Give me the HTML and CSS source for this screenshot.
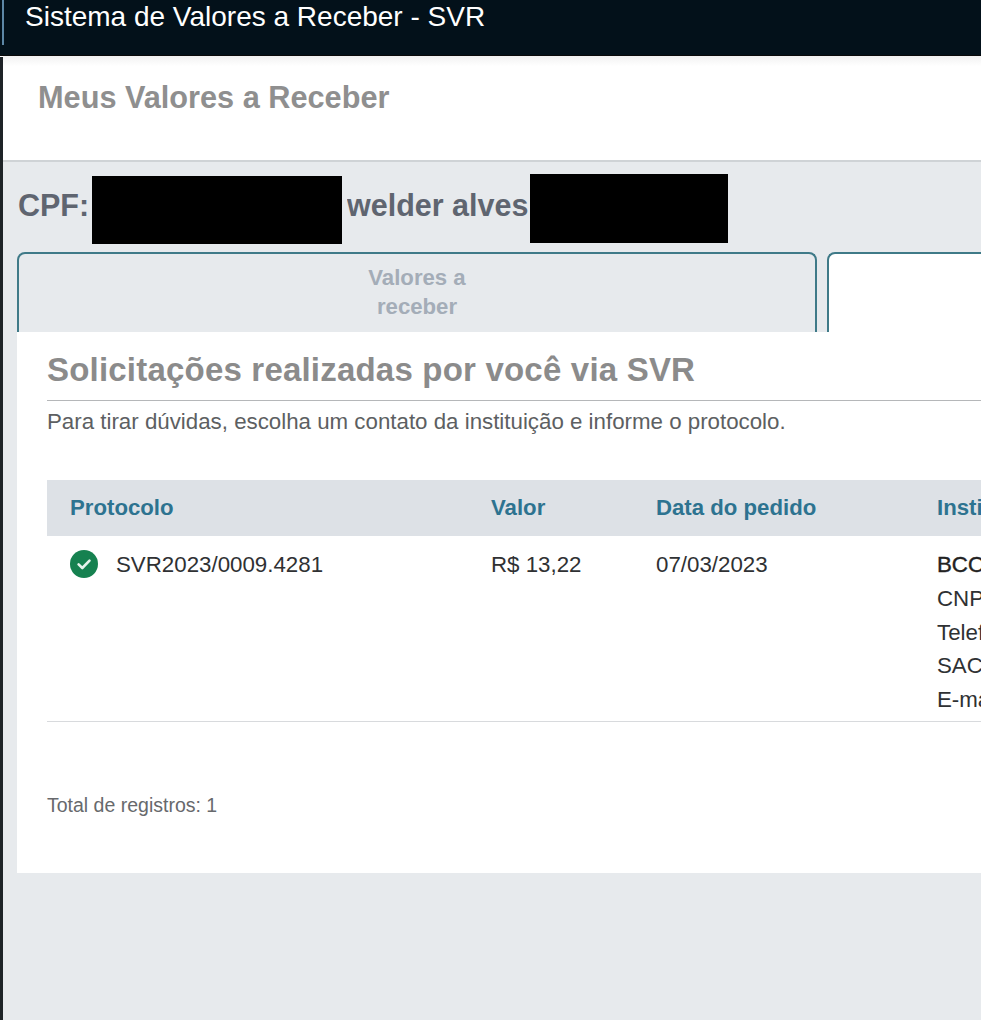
FILE: index.html
```html
<!DOCTYPE html>
<html lang="pt-BR">
<head>
<meta charset="utf-8">
<title>Sistema de Valores a Receber - SVR</title>
<link rel="stylesheet" href="styles.css">
</head>
<body>
<div class="frame">
  <header class="topbar"><span class="topbar-mark"></span><span class="topbar-title">Sistema de Valores a Receber - SVR</span></header>
  <div class="shell">
    <div class="edge"></div>
    <main class="page">
      <section class="page-head"><h1>Meus Valores a Receber</h1></section>
      <section class="content">
        <div class="identity">
          <span class="id-label">CPF:</span>
          <span class="redact redact-cpf"></span>
          <span class="id-name">welder alves</span>
          <span class="redact redact-name"></span>
        </div>
        <nav class="tabs">
          <div class="tab tab-inactive">Valores a<br>receber</div>
          <div class="tab tab-active"></div>
        </nav>
        <article class="card">
          <h2>Solicitações realizadas por você via SVR</h2>
          <p class="lead">Para tirar dúvidas, escolha um contato da instituição e informe o protocolo.</p>
          <div class="table">
            <div class="thead">
              <div>Protocolo</div><div>Valor</div><div>Data do pedido</div><div>Instituição</div>
            </div>
            <div class="trow">
              <div class="protocol">
                <svg class="check" viewBox="0 0 28 28" aria-hidden="true"><circle cx="14" cy="14" r="14" fill="#168150"/><path d="M8.6 14.4l3.7 3.6 7.2-7.4" fill="none" stroke="#e6f3ec" stroke-width="2.6" stroke-linecap="round" stroke-linejoin="round"/></svg>
                <span>SVR2023/0009.4281</span>
              </div>
              <div>R$ 13,22</div>
              <div>07/03/2023</div>
              <div class="inst">
                <strong>BCO</strong>
                <span>CNPJ:</span>
                <span>Telefone:</span>
                <span>SAC:</span>
                <span>E-mail:</span>
              </div>
            </div>
          </div>
          <p class="total">Total de registros: 1</p>
        </article>
      </section>
    </main>
  </div>
</div>
</body>
</html>
```
FILE: styles.css
```css
* { box-sizing: border-box; }
html, body { margin: 0; padding: 0; background: #fff; }
body { font-family: "Liberation Sans", Arial, sans-serif; }
.frame { width: 981px; height: 1020px; overflow: hidden; display: flex; flex-direction: column; }
.topbar { height: 56px; flex: none; background: #03111a; color: #fff; display: flex; align-items: flex-start; border-bottom: 1px solid #0a0a0a; }
.topbar-mark { width: 2px; height: 45px; margin-left: 2px; background: #5d87a5; flex: none; }
.topbar-title { margin-left: 21px; font-size: 28px; line-height: 33px; white-space: nowrap; }
.shell { flex: 1; display: flex; min-height: 0; }
.edge { width: 3px; flex: none; background: #1e2327; margin-top: 1px; }
.page { flex: 1; min-width: 0; display: flex; flex-direction: column; }
.page-head { height: 106px; flex: none; background: linear-gradient(#f1f1f1, #fff 10px); border-bottom: 2px solid #cfd3d6; padding: 25px 0 0 35px; }
.page-head h1 { margin: 0; font-size: 30.7px; line-height: 34px; font-weight: 700; color: #8f8f8f; }
.content { flex: 1; min-height: 0; background: #e7eaed; padding: 7px 0 0 14px; display: flex; flex-direction: column; }
.identity { height: 83px; flex: none; display: flex; align-items: center; font-weight: 700; font-size: 30.5px; color: #5f6570; }
.id-label { width: 75px; padding-left: 1px; margin-bottom: 10px; }
.id-name { width: 183px; margin-left: 5px; margin-bottom: 10px; white-space: nowrap; overflow: hidden; }
.redact { background: #000; flex: none; }
.redact-cpf { width: 250px; height: 68px; margin-bottom: 1px; }
.redact-name { width: 198px; height: 69px; margin-bottom: 4px; }
.tabs { display: flex; gap: 10px; height: 80px; flex: none; }
.tab { border: 2px solid #3f7a88; border-bottom: 0; border-radius: 8px 8px 0 0; text-align: center; }
.tab-inactive { width: 800px; background: #e7eaed; color: #a4adb8; font-size: 22.2px; font-weight: 700; line-height: 29px; padding-top: 9px; }
.tab-active { flex: 1; background: #fff; border-right: 0; border-radius: 8px 0 0 0; }
.card { flex: none; height: 541px; background: #fff; padding: 19px 0 0 30px; overflow: hidden; }
.card h2 { margin: 0; padding-bottom: 11px; border-bottom: 1px solid #b5b7b9; font-size: 33px; line-height: 38px; font-weight: 700; color: #8b8b8b; letter-spacing: 0.2px; white-space: nowrap; }
.lead { margin: 8px 0 0; font-size: 22.3px; line-height: 26px; color: #5d5f62; white-space: nowrap; }
.table { margin-top: 45px; width: 934px; font-size: 22.3px; color: #2f3133; border-bottom: 1px solid #d8dadd; height: 242px; overflow: hidden; }
.thead, .trow { display: grid; grid-template-columns: 421px 165px 281px 300px; padding-left: 23px; white-space: nowrap; }
.thead { height: 56px; background: #dde1e6; align-items: center; color: #2d7390; font-weight: 700; font-size: 22.2px; }
.trow { padding-top: 15px; line-height: 28px; }
.protocol { display: flex; align-items: flex-start; gap: 18px; height: 28px; }
.check { width: 28px; height: 28px; flex: none; margin-top: -1px; }
.inst { display: flex; flex-direction: column; line-height: 33.8px; margin-top: -3px; }
.inst strong { font-weight: 400; color: #222; -webkit-text-stroke: 0.4px #222; }
.total { margin: 71px 0 0; font-size: 19.5px; line-height: 24px; color: #67696c; white-space: nowrap; }
```
